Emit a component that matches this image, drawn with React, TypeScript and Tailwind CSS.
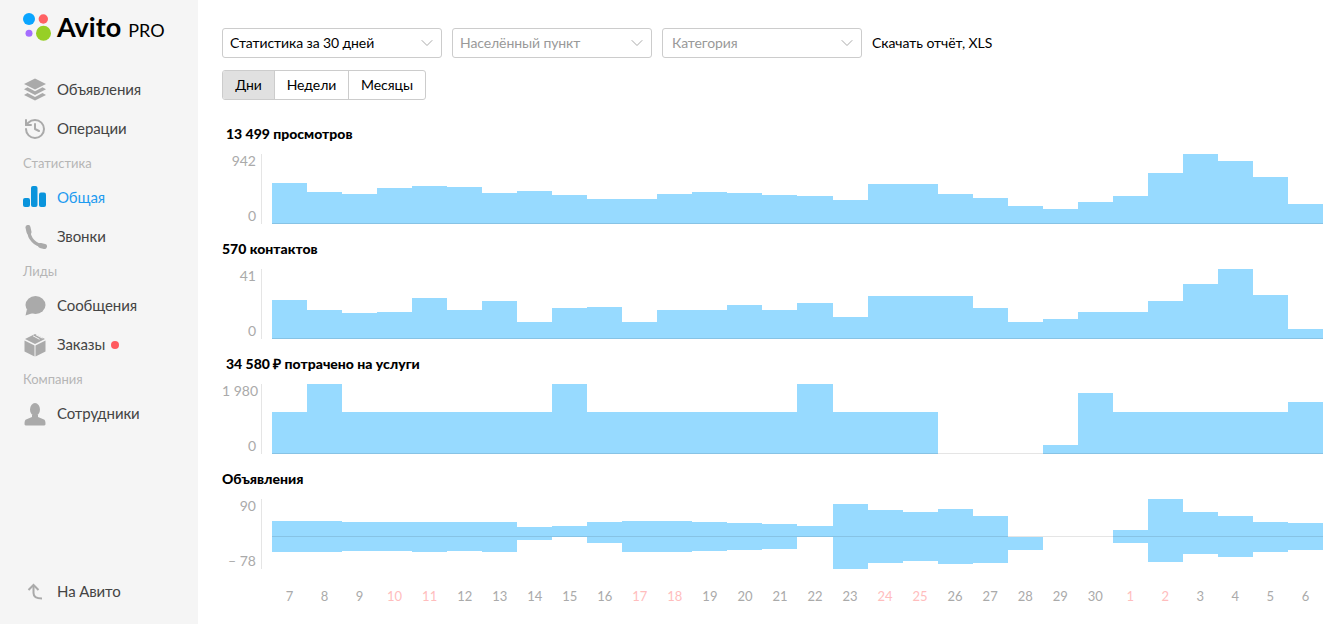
import { ChevronDown, History } from "lucide-react";
import type { ReactNode } from "react";

const VIEWS = [41, 32, 30, 36, 38, 37, 31, 33, 29, 25, 25, 30, 32, 31, 29, 28, 24, 40, 40, 30, 26, 18, 15, 22, 28, 51, 70, 63, 47, 20];
const CONTACTS = [39, 29, 26, 27, 41, 29, 38, 17, 31, 32, 17, 29, 29, 34, 29, 36, 22, 43, 43, 43, 31, 17, 20, 27, 27, 38, 55, 70, 44, 10];
const SPENT = [42, 70, 42, 42, 42, 42, 42, 42, 70, 42, 42, 42, 42, 42, 42, 70, 42, 42, 42, 0, 0, 0, 9, 61, 42, 42, 42, 42, 42, 52];
const ADS_UP = [16, 16, 15, 15, 15, 15, 15, 10, 11, 15, 16, 16, 15, 14, 13, 11, 33, 27, 25, 28, 21, 0, 0, 0, 7, 38, 25, 21, 15, 14];
const ADS_DOWN = [15, 15, 14, 14, 15, 14, 15, 3, 0, 6, 15, 15, 14, 13, 12, 0, 32, 26, 24, 27, 26, 13, 0, 0, 6, 25, 17, 20, 15, 13];

const DAYS = [7, 8, 9, 10, 11, 12, 13, 14, 15, 16, 17, 18, 19, 20, 21, 22, 23, 24, 25, 26, 27, 28, 29, 30, 1, 2, 3, 4, 5, 6];
const WEEKEND_INDEXES = [3, 4, 10, 11, 17, 18, 24, 25];

function LayersIcon() {
  return (
    <svg width="24" height="24" viewBox="0 0 24 24" fill="#aaa">
      <path d="M12 0.500 23 6 12 11.500 1 6Z" />
      <path d="M4.500 9.300 12 13.300 19.500 9.300 23 11.300 12 17 1 11.300Z" />
      <path d="M4.500 15 12 19 19.500 15 23 17 12 22.500 1 17Z" />
    </svg>
  );
}

function StatsIcon() {
  return (
    <svg width="24" height="24" viewBox="0 0 24 24" fill="#0a94dc">
      <rect x="0" y="12" width="7" height="9" rx="2" />
      <rect x="8" y="0" width="6.500" height="21" rx="2" />
      <rect x="16" y="6.500" width="7" height="14.500" rx="2" />
    </svg>
  );
}

function PhoneIcon() {
  return (
    <svg width="24" height="24" viewBox="0 0 24 24" fill="none" stroke="#aaa" strokeLinecap="round">
      <path d="M6 6C5.500 13 12.500 20.500 19.500 20.500" strokeWidth="3.200" />
      <path d="M5 2.500 6 7" strokeWidth="5" />
      <path d="M17.500 20.500 21.500 21.500" strokeWidth="5" />
    </svg>
  );
}

function BubbleIcon() {
  return (
    <svg width="24" height="24" viewBox="0 0 24 24" fill="#aaa">
      <ellipse cx="12.500" cy="11" rx="10" ry="9" />
      <path d="M4 15 2.500 21.500 10 19Z" />
    </svg>
  );
}

function BoxIcon() {
  return (
    <svg width="24" height="24" viewBox="0 0 24 24" fill="#aaa">
      <path d="M1.500 7.500 11.500 12.500V23.500L1.500 18.500Z" />
      <path d="M22.500 7.500 12.500 12.500V23.500L22.500 18.500Z" />
      <path d="M12 1 22 6 12 11 2 6Z" />
      <path d="M10 2.800 16.500 6.300M13 1.800 19.500 5.200" stroke="#f5f5f5" strokeWidth="1" />
    </svg>
  );
}

function PersonIcon() {
  return (
    <svg width="24" height="24" viewBox="0 0 24 24" fill="#aaa">
      <ellipse cx="12" cy="7.500" rx="5" ry="6.500" />
      <path d="M9 13h6v2l6 2.500c1 .5 1.500 2 1.500 4.500 0 1-1 1.500-2 1.500h-17c-1 0-2-.5-2-1.500 0-2.500.5-4 1.500-4.500L9 15Z" />
    </svg>
  );
}

function BackIcon() {
  return (
    <svg width="24" height="24" viewBox="0 0 24 24" fill="none" stroke="#aaa" strokeWidth="2">
      <path d="M5.500 10 10.500 5 15.500 10" />
      <path d="M10.500 5V13C10.500 17 13 18.500 19 18.500" />
    </svg>
  );
}

function NavItem({ icon, label, active, dot }: { icon: ReactNode; label: string; active?: boolean; dot?: boolean }) {
  return (
    <a className={`flex h-[39px] items-center gap-[10px] text-[15px] tracking-[-0.1px] ${active ? "text-[#1e9bf0]" : "text-[#444]"}`}>
      <span className="flex h-6 w-6 items-center justify-center">{icon}</span>
      {label}
      {dot && <span className="-ml-[4px] h-2 w-2 rounded-full bg-[#ff5a5f]" />}
    </a>
  );
}

function NavGroup({ label }: { label: string }) {
  return <div className="flex h-[30px] items-center pt-[2px] text-[13px] text-[#b5b5b5]">{label}</div>;
}

function Sidebar() {
  return (
    <aside className="flex h-full w-[198px] shrink-0 flex-col bg-[#f5f5f5] pl-[23px]">
      <div className="relative flex h-[70px] items-start">
        <svg width="32" height="32" viewBox="0 0 32 32" className="mt-[12px]">
          <circle cx="6" cy="7" r="6" fill="#0aa5ff" />
          <circle cx="20.300" cy="7" r="4.700" fill="#ff6163" />
          <circle cx="6" cy="21.300" r="3.500" fill="#a56dff" />
          <circle cx="20.500" cy="21.300" r="7.500" fill="#97cf26" />
        </svg>
        <div className="mt-[9px] ml-[2px] flex items-baseline text-black">
          <span className="text-[27px] leading-[36px] font-bold">Avito</span>
          <span className="ml-[7px] text-[18px] leading-[36px]">PRO</span>
        </div>
      </div>
      <NavItem icon={<LayersIcon />} label="Объявления" />
      <NavItem icon={<History size={24} color="#aaa" strokeWidth={2} />} label="Операции" />
      <NavGroup label="Статистика" />
      <NavItem icon={<StatsIcon />} label="Общая" active />
      <NavItem icon={<PhoneIcon />} label="Звонки" />
      <NavGroup label="Лиды" />
      <NavItem icon={<BubbleIcon />} label="Сообщения" />
      <NavItem icon={<BoxIcon />} label="Заказы" dot />
      <NavGroup label="Компания" />
      <NavItem icon={<PersonIcon />} label="Сотрудники" />
      <div className="mt-auto mb-[13px]">
        <NavItem icon={<BackIcon />} label="На Авито" />
      </div>
    </aside>
  );
}

function Select({ label, placeholder, width, inset }: { label: string; placeholder?: boolean; width: string; inset?: string }) {
  return (
    <button className={`flex h-[30px] items-center justify-between rounded-[3px] border border-[#ccc] pr-[4px] text-sm tracking-[-0.1px] ${inset ?? "pl-[7px]"} ${width} ${placeholder ? "text-[#999]" : "text-black"}`}>
      {label}
      <ChevronDown size={20} color="#aaa" strokeWidth={1.200} />
    </button>
  );
}

function Tabs() {
  return (
    <div className="mt-3 flex h-[30px] w-[204px] rounded-[3px] border border-[#ccc] text-sm tracking-[-0.05px] text-black">
      <div className="flex w-[51px] items-center justify-center rounded-l-[2px] bg-[#e0e0e0]">Дни</div>
      <div className="flex w-[74px] items-center justify-center border-l border-[#ccc]">Недели</div>
      <div className="flex flex-1 items-center justify-center border-l border-[#ccc]">Месяцы</div>
    </div>
  );
}

function Chart({ title, indent, max, min, values, down }: { title: string; indent?: boolean; max: string; min: string; values: number[]; down?: number[] }) {
  return (
    <section className="h-[115px]">
      <h2 className={`flex h-[20px] items-center text-sm font-black text-black ${indent ? "pl-1" : ""}`}>{title}</h2>
      <div className="mt-[10px] flex h-[70px]">
        <div className="flex w-[34px] flex-col justify-between pb-px text-right text-sm leading-[14px] whitespace-nowrap text-[#aaa]">
          <span>{max}</span>
          <span>{min}</span>
        </div>
        <div className="mr-[10px] ml-[5px] w-px bg-[#e5e5e5]" />
        <div className="relative flex w-[1051px]">
          {values.map((v, i) =>
            down ? (
              <div key={i} className="flex flex-1 flex-col">
                <div className="flex h-[38px] items-end">
                  <div className="w-full bg-[#97daff]" style={{ height: v }} />
                </div>
                <div className="h-[32px]">
                  <div className="w-full bg-[#97daff]" style={{ height: down[i] }} />
                </div>
              </div>
            ) : (
              <div key={i} className="flex flex-1 items-end">
                <div className="w-full bg-[#97daff]" style={{ height: v }} />
              </div>
            ),
          )}
          <div className={`absolute right-0 left-0 h-px bg-black/10 ${down ? "top-[37px]" : "bottom-0"}`} />
        </div>
      </div>
    </section>
  );
}

export default function App() {
  return (
    <div className="flex h-screen overflow-hidden bg-white font-[Lato,sans-serif]">
      <Sidebar />
      <main className="flex-1 pt-[28px] pl-[24px]">
        <div className="flex items-center gap-[10px]">
          <Select label="Статистика за 30 дней" width="w-[220px]" />
          <Select label="Населённый пункт" placeholder width="w-[200px]" />
          <Select label="Категория" placeholder width="w-[200px]" inset="pl-[9px]" />
          <a className="text-sm tracking-[-0.05px] text-black">Скачать отчёт, XLS</a>
        </div>
        <Tabs />
        <div className="mt-[24px]">
          <Chart title="13 499 просмотров" indent max="942" min="0" values={VIEWS} />
          <Chart title="570 контактов" max="41" min="0" values={CONTACTS} />
          <Chart title="34 580 ₽ потрачено на услуги" indent max="1 980" min="0" values={SPENT} />
          <Chart title="Объявления" max="90" min="– 78" values={ADS_UP} down={ADS_DOWN} />
        </div>
        <div className="mt-[3px] ml-[50px] flex w-[1051px] text-[13px] text-[#aaa]">
          {DAYS.map((d, i) => (
            <span key={i} className={`flex-1 text-center ${WEEKEND_INDEXES.includes(i) ? "text-[#ffbdbd]" : ""}`}>
              {d}
            </span>
          ))}
        </div>
      </main>
    </div>
  );
}
